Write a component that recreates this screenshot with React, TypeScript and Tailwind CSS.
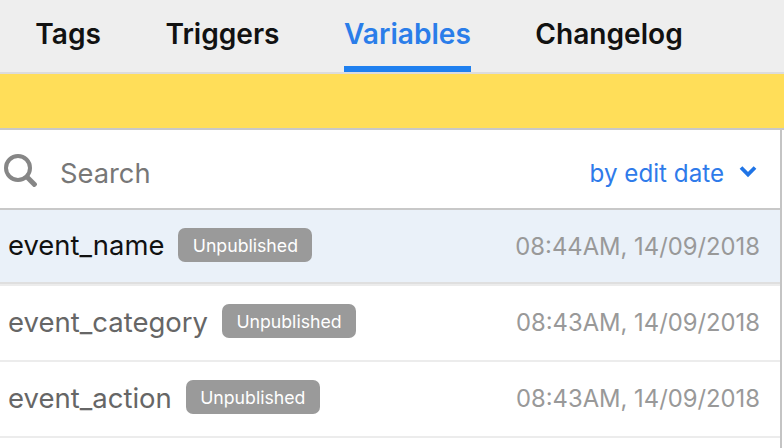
import React from "react";

const rows = [
  { name: "event_name", time: "08:44AM, 14/09/2018", active: true },
  { name: "event_category", time: "08:43AM, 14/09/2018", active: false },
  { name: "event_action", time: "08:43AM, 14/09/2018", active: false },
];

function Tab({ label, active }: { label: string; active?: boolean }) {
  return (
    <div className={active ? "flex h-[72px] items-center border-b-[6px] border-[#1f80ef] pt-[2px] text-[#2a7de9]" : "flex h-[72px] items-center border-b-[6px] border-transparent pt-[2px] text-[#111111]"}>
      {label}
    </div>
  );
}

export default function App() {
  return (
    <div className="h-[448px] w-[784px] overflow-hidden bg-white font-['Inter',sans-serif]">
      <div className="flex h-[74px] gap-[64.5px] border-b-2 border-[#dcdcdc] bg-[#eeeeee] pl-[35.3px] text-[28.1px] font-semibold">
        <Tab label="Tags" />
        <Tab label="Triggers" />
        <Tab label="Variables" active />
        <Tab label="Changelog" />
      </div>
      <div className="h-[56px] border-b-2 border-[#c8c8c8] bg-[#ffde59]" />
      <div className="h-[318px] w-[782px] border-r-2 border-[#c4c4c4]">
        <div className="flex h-[80px] items-center border-b-2 border-[#c8c8c8] pl-[4px] pr-[23px]">
          <svg width="33" height="33" viewBox="0 0 33 33" fill="none" className="mt-[3px]">
            <circle cx="14" cy="14" r="12" stroke="#868686" strokeWidth="4" />
            <path d="M22.5 22.5L32 32" stroke="#868686" strokeWidth="5" />
          </svg>
          <span className="ml-[23px] pt-[10px] text-[27.3px] text-[#777777]">Search</span>
          <span className="ml-auto pt-[10px] text-[24.2px] text-[#2f7bea]">by edit date</span>
          <svg width="18" height="13" viewBox="0 0 18 13" fill="none" className="ml-[15px] mt-[5px]">
            <path d="M2 2.5L9 9.5L16 2.5" stroke="#1f74e6" strokeWidth="3.8" />
          </svg>
        </div>
        {rows.map((r) => (
          <div
            key={r.name}
            className={
              r.active
                ? "flex h-[76px] items-center border-b-2 border-[#ececec] bg-[#eaf1f9] pb-[4px] pl-[8px] pr-[20px] shadow-[inset_0_-2px_0_#dfdfdf]"
                : "flex h-[76px] items-center border-b-2 border-[#ececec] pb-[4px] pl-[8px] pr-[20px]"
            }
          >
            <span className={r.active ? "pt-[2px] text-[27.4px] text-[#111111]" : "pt-[4px] text-[27.5px] text-[#666666]"}>{r.name}</span>
            <span className="ml-[14px] flex h-[34px] w-[134px] items-center justify-center rounded-[7px] bg-[#9a9a9a] pt-[2px] text-[17.7px] text-white">
              Unpublished
            </span>
            <span className={r.active ? "ml-auto pt-[3px] text-[23.8px] text-[#999999]" : "ml-auto pt-[4px] text-[23.8px] text-[#999999]"}>{r.time}</span>
          </div>
        ))}
      </div>
    </div>
  );
}
